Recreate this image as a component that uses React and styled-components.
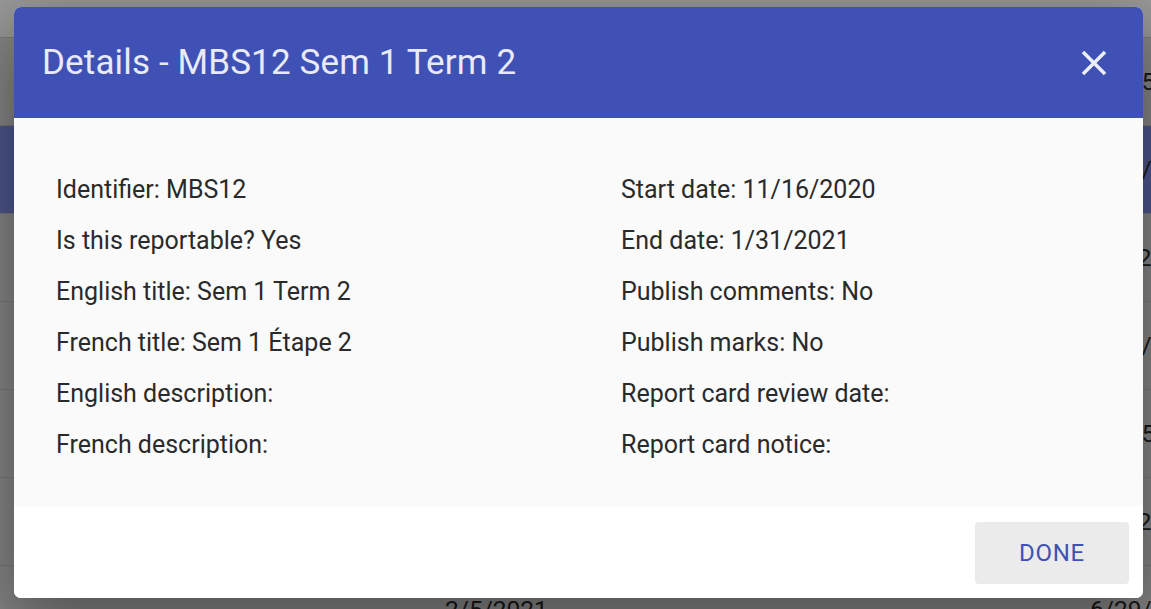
import styled, { createGlobalStyle } from "styled-components";

const GlobalStyle = createGlobalStyle`
    html, body {
        margin: 0;
        padding: 0;
        overflow: hidden;
        background: #fff;
    }
    body {
        font-family: Roboto, "Liberation Sans", Arial, sans-serif;
    }
    * {
        box-sizing: border-box;
    }
`;

const terms = [
    { start: "11/16/2020", end: "11/25/2020" },
    { start: "11/16/2020", end: "1/31/2021", selected: true },
    { start: "11/16/2020", end: "1/8/2021" },
    { start: "2/1/2021", end: "1/31/2021" },
    { start: "2/1/2021", end: "12/15/2020" },
    { start: "2/1/2021", end: "2/5/2021" },
    { start: "2/5/2021", end: "6/29/2021" },
];

const leftFields = [
    "Identifier: MBS12",
    "Is this reportable? Yes",
    "English title: Sem 1 Term 2",
    "French title: Sem 1 Étape 2",
    "English description:",
    "French description:",
];

const rightFields = [
    "Start date: 11/16/2020",
    "End date: 1/31/2021",
    "Publish comments: No",
    "Publish marks: No",
    "Report card review date:",
    "Report card notice:",
];

const CloseIcon = () => (
    <svg width="42" height="42" viewBox="0 0 24 24" fill="currentColor">
        <path d="M19 6.41L17.59 5 12 10.59 6.41 5 5 6.41 10.59 12 5 17.59 6.41 19 12 13.41 17.59 19 19 17.59 13.41 12z" />
    </svg>
);

export default function App() {
    return (
        <>
            <GlobalStyle />
            <SPage>
                <SHeadRow />
                {terms.map((t, i) => (
                    <SRow key={i} $selected={t.selected}>
                        <SCell />
                        <SCell>{t.start}</SCell>
                        <SCell>{t.end}</SCell>
                    </SRow>
                ))}
            </SPage>
            <SBackdrop />
            <SDialog role="dialog">
                <SHeader>
                    <STitle>Details - MBS12 Sem 1 Term 2</STitle>
                    <SCloseButton aria-label="close">
                        <CloseIcon />
                    </SCloseButton>
                </SHeader>
                <SContent>
                    <SColumn>
                        {leftFields.map((f) => (
                            <SField key={f}>{f}</SField>
                        ))}
                    </SColumn>
                    <SColumn>
                        {rightFields.map((f) => (
                            <SField key={f}>{f}</SField>
                        ))}
                    </SColumn>
                </SContent>
                <SActions>
                    <SDoneButton>Done</SDoneButton>
                </SActions>
            </SDialog>
        </>
    );
}

const SPage = styled.div`
    height: 100vh;
    overflow: hidden;
    display: flex;
    flex-direction: column;
    background: #e2e2e2;
`;

const SHeadRow = styled.div`
    flex: 0 0 38px;
    background: #fff;
    border-bottom: 1px solid #cdcdcd;
`;

const SRow = styled.div`
    flex: 0 0 88px;
    display: grid;
    grid-template-columns: 445px 645px 1fr;
    align-items: center;
    background: ${(p) => (p.$selected ? "#8492f0" : "#e2e2e2")};
    border-bottom: 1px solid #cbcbcb;
`;

const SCell = styled.div`
    font-size: 24.5px;
    color: #2a2a2a;
    white-space: nowrap;
`;

const SBackdrop = styled.div`
    position: fixed;
    inset: 0;
    background: rgba(0, 0, 0, 0.4);
`;

const SDialog = styled.div`
    position: fixed;
    left: 14px;
    top: 7px;
    width: 1129px;
    height: 591px;
    display: flex;
    flex-direction: column;
    border-radius: 7px;
    overflow: hidden;
    background: #fff;
    box-shadow: 0 19px 66px 5px rgba(0, 0, 0, 0.2),
        0 40px 66px 5px rgba(0, 0, 0, 0.14),
        0 16px 80px 8px rgba(0, 0, 0, 0.12);
`;

const SHeader = styled.div`
    flex: 0 0 111px;
    display: flex;
    align-items: center;
    justify-content: space-between;
    padding: 0 27px 0 28px;
    background: #3f51b5;
`;

const STitle = styled.h2`
    margin: 0;
    font-size: 35px;
    font-weight: 400;
    letter-spacing: 0.14px;
    color: #e8eaf6;
`;

const SCloseButton = styled.button`
    display: flex;
    align-items: center;
    justify-content: center;
    width: 44px;
    height: 44px;
    padding: 0;
    border: none;
    background: transparent;
    color: #eceefa;
    cursor: pointer;
`;

const SContent = styled.div`
    flex: 1;
    display: grid;
    grid-template-columns: 565px 1fr;
    padding: 46px 42px 0;
    background: #fafafa;
`;

const SColumn = styled.div`
    display: flex;
    flex-direction: column;
`;

const SField = styled.p`
    margin: 0;
    height: 51px;
    line-height: 51px;
    font-size: 25px;
    color: #2a2a2a;
    white-space: nowrap;
`;

const SActions = styled.div`
    flex: 0 0 92px;
    display: flex;
    justify-content: flex-end;
    align-items: center;
    padding: 1px 14px 0;
    background: #fff;
`;

const SDoneButton = styled.button`
    width: 154px;
    height: 62px;
    border: none;
    border-radius: 4px;
    background: #ebebeb;
    color: #3f51b5;
    font-family: Roboto, "Liberation Sans", Arial, sans-serif;
    font-size: 24px;
    font-weight: 400;
    letter-spacing: 0.02857em;
    text-transform: uppercase;
    cursor: pointer;
`;
